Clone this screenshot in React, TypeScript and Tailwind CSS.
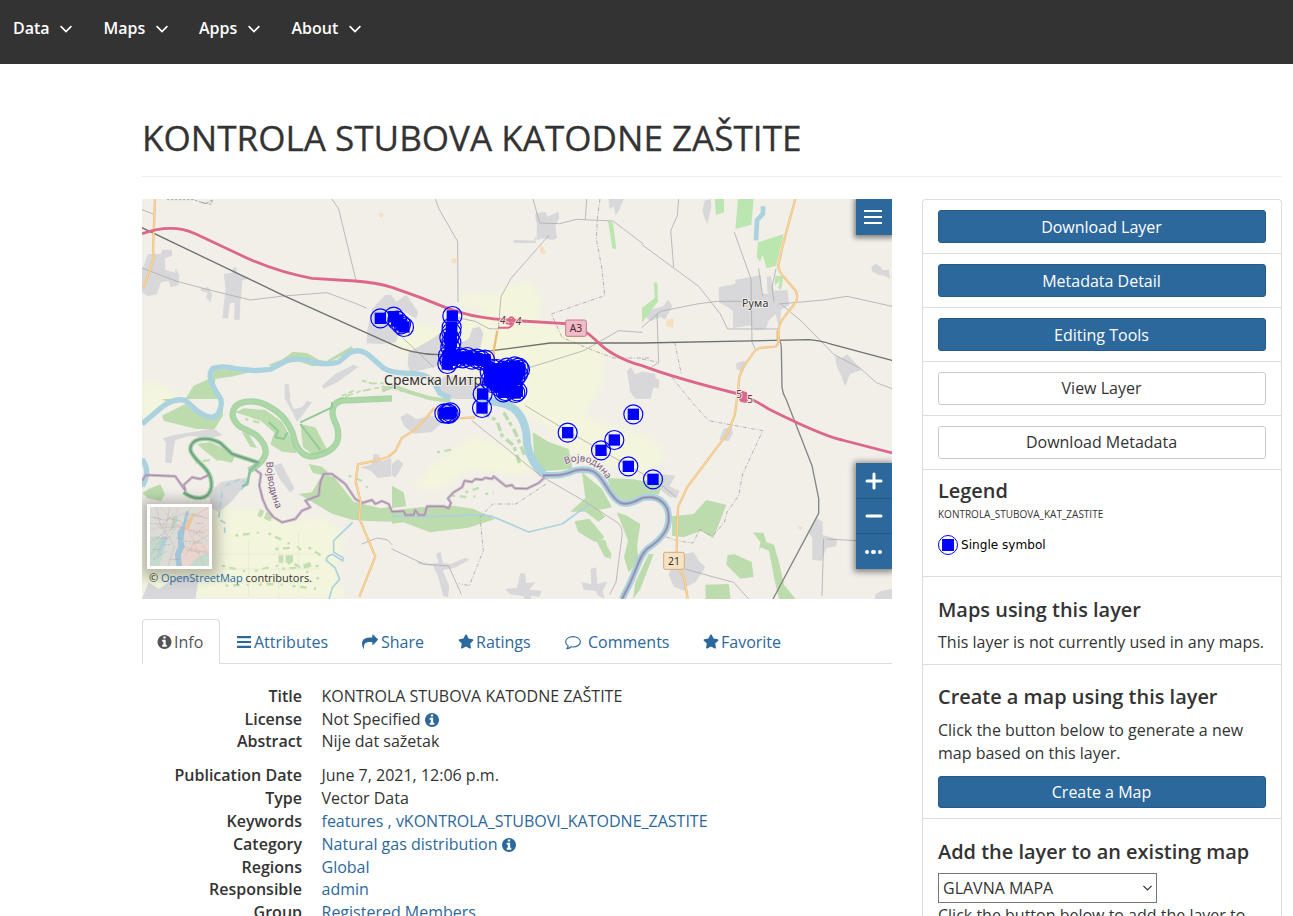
import type { ReactNode } from "react";
import { FaStar } from "react-icons/fa";
import { Minus, Plus } from "lucide-react";

const navItems = [
  { label: "Data", cls: "w-[90.500px] gap-[10px]" },
  { label: "Maps", cls: "w-[95.500px] gap-[11px]" },
  { label: "Apps", cls: "w-[92.500px] gap-[11px]" },
  { label: "About", cls: "w-[90px] gap-[10.500px]" },
];

function Chevron({ className = "" }: { className?: string }) {
  return (
    <svg viewBox="0 0 12 8" className={className} fill="none" stroke="currentColor" strokeWidth="1.700">
      <path d="M.6 1.200 6 6.500l5.400-5.300" />
    </svg>
  );
}

function InfoIcon({ className = "" }: { className?: string }) {
  return (
    <svg viewBox="0 128 1536 1536" className={className} fill="currentColor">
      <path d="M1024 1376v-160q0-14-9-23t-23-9h-96v-512q0-14-9-23t-23-9h-320q-14 0-23 9t-9 23v160q0 14 9 23t23 9h96v320h-96q-14 0-23 9t-9 23v160q0 14 9 23t23 9h448q14 0 23-9t9-23zm-128-896v-160q0-14-9-23t-23-9h-192q-14 0-23 9t-9 23v160q0 14 9 23t23 9h192q14 0 23-9t9-23zm640 416q0 209-103 385.500t-279.500 279.500-385.500 103-385.500-103-279.500-279.500-103-385.500 103-385.500 279.500-279.500 385.500-103 385.500 103 279.500 279.500 103 385.500z" />
    </svg>
  );
}

function ShareIcon() {
  return (
    <svg viewBox="0 0 1792 1792" className="h-4 w-4" fill="currentColor">
      <path d="M1792 640q0 26-19 45l-512 512q-19 19-45 19t-45-19-19-45v-256h-224q-98 0-175.500 6t-154 21.500-133 42.500-105.500 69.500-80 101-48.500 138.500-17.500 181q0 55 5 123 0 6 2.500 23.500t2.500 26.500q0 15-8.500 25t-23.500 10q-16 0-28-17-7-9-13-22t-13.500-30-10.500-24q-127-285-127-451 0-199 53-333 162-403 875-403h224v-256q0-26 19-45t45-19 45 19l512 512q19 19 19 45z" />
    </svg>
  );
}

function CommentIcon() {
  return (
    <svg viewBox="0 0 16 16" className="h-4 w-4" fill="none" stroke="currentColor" strokeWidth="1.150" strokeLinejoin="round">
      <path d="M8 2.600c4.100 0 7.400 2.300 7.400 5.200S12.100 13 8 13c-.7 0-1.300-.1-1.900-.2-1.100 1-2.600 1.700-4.300 1.900.9-.9 1.300-1.700 1.500-2.800C1.600 11 .6 9.500.6 7.800.6 4.900 3.900 2.600 8 2.600z" />
    </svg>
  );
}

function NavBar() {
  return (
    <nav className="flex h-16 shrink-0 bg-[#333333] pl-[13px] pt-[17px] text-white">
      {navItems.map((n) => (
        <div key={n.label} className={`flex h-[22px] items-center font-semibold ${n.cls}`}>
          <span>{n.label}</span>
          <Chevron className="mt-[2px] h-2 w-3" />
        </div>
      ))}
    </nav>
  );
}

// Map drawing units: three per CSS pixel.
const points: [number, number][] = [
  [715, 358], [755, 353], [766, 365], [777, 376], [786, 384],
  [931, 351], [929, 385], [928, 400], [922, 416], [928, 430], [925, 445],
  [918, 470], [922, 484], [916, 495], [934, 480], [950, 474], [962, 478],
  [976, 474], [990, 482], [1005, 479], [1018, 484], [1029, 482],
  [1043, 518], [1044, 545], [1052, 510], [1060, 525], [1055, 540], [1070, 530], [1085, 515],
  [1095, 506], [1100, 530], [1092, 550], [1080, 555], [1112, 520], [1112, 548], [1065, 510], [1075, 540],
  [1120, 538], [1130, 506], [1134, 512], [1128, 525], [1118, 502], [1105, 512],
  [1075, 565], [1090, 576], [1110, 570], [1126, 577], [1120, 582], [1070, 552],
  [1084, 580], [1050, 552], [1022, 585], [1020, 627],
  [907, 643], [916, 643], [925, 640], [920, 645],
  [1277, 701], [1417, 723], [1377, 754], [1459, 802], [1474, 646], [1533, 841],
];

const villages = [
  "M18 165h38l5-13h28l2 18-22 8 1 35 30 8v-14l12 20-3 32-22 5-8-18-22 4-13 36-27 6-17-12v-66z",
  "M245 225l25-4 3-15h12l-2 16 40 15-22 8-2 32-4 30-2 55h-17l2-50h-14l-6 46h-17l6-54 4-35z",
  "M175 268l25-3 10 22-4 23-13-14 4-15-20-6z",
  "M690 330l40-42h18l15 20 30-20 35 50-5 22-40-25-12 65-10 30-45 5-42-2 2-40z",
  "M800 460l70-40 25-18 20 10-5 75-35 18-70 15-8-25z",
  "M980 420l12-32 22-5 10 22-10 45-18 18-35-8-10-25z",
  "M880 560l30-30 90 10 25 30v30H905z",
  "M1181 42l30-3 5 14 34-15 2 20-12 20 5 40-15 5-22-5-25 5 2-47-5-20z",
  "M1115 122l62 3v-10h4v17h-66z",
  "M1400 0h45l-12 30-12 20-6-28-12 8z",
  "M1688 5l18-5 2 25-12 50-7-15-8-25z",
  "M1730 265l50-10v-12l77-15 2 55 18 2-3-50 12-5 10 45 40-2 6 46-25 14-2 35-6 10-8-32-20 18-10 25-30 5-18-15-50 8v-50l-12-10-30-17z",
  "M1514 342l20-12 30-8 15-20 12 20-22 40-12-8-30 12-22-15z",
  "M2188 204l13-10 18 12 2 8 20-2 3 28-15-10-18-2-20-10z",
  "M2080 470l20 8 15-13 14 15 30 33-35 12-15 38-10-30-16-35z",
  "M1455 516l12-12 12 22 21-8 40 6v12l12 8-2 25-15-4-10 34h-45l-15-20z",
  "M1783 493l24-8 6 15-12 18-18-8z",
  "M540 560l40-35 55-28 14 7-62 45-42 20z",
  "M428 555h12l6 45h-18z",
  "M62 718l35-10 80-13 35-7 30 20-30 8-70-5-42 12-12 70-18-2 2-60z",
  "M202 880l35-30 50-10 38-5-22 30-32 40-40 35-25-15z",
  "M395 800l22-8 40 75-12 15-32-42z",
  "M430 600h12l13 30 25-5 15-20 15 5-30 40-15 18-12-25z",
  "M655 805l35-10 5-30 15 2 8 20 30-10v55l-40 5-22-22z",
  "M775 655l20-12 28 18 45-12 40 15-38 35-55 5-28-22z",
  "M750 795l18-15 16 15-24 42-10-8z",
  "M825 1085l35 10 30-3-8-28 14-5 7 34 25 1 42-18 12 6-45 25-35 6 20 50-4 32-14-4-16-60-15-30-46-6z",
  "M1090 1170l35-3 10-45 15 2 2 28 28-2-18 22 38 3-8 18-25-2 3 20-16 2-10-22-40-5z",
  "M1318 1150l30 5-2-45 16-5 4 50 30-8-14 30 6 22-18-8-10-15-34-4z",
  "M1550 825l50 5-18 32 30 15-8 20-22-4-40-32z",
  "M1745 690l25-8 2 22-12 22-28-4z",
  "M1600 1070l55-10 15 25 20 20-30 45-25 12-5 15-34-14-16-35z",
  "M2000 1000l22-42 20 10v40l43 12-2 22-30 5-14 38-28-2v-65z",
  "M2200 1185l20-10 30-5v30h-50z",
  "M20 1150l30 20 60-40 60 10-10 60H0z",
];

const greens = [
  "M210 510l60 3 60 5-55 14-55 8-2 19 20 41H130l25-40 45-20z",
  "M378 498l45-18 30-22 42 4 38 22 20 2 75-44 8 10-90 45-35 5-60-22-60 22z",
  "M60 650l70-35 35 25 60 15 10-55h8v50l-25 40-55 0-60-15-38-10z",
  "M60 600h60l-40 14z",
  "M280 640l25-12 65 5 50 35 35 65 10 30-45-5-35-22 12-35-40-35-42-15z",
  "M475 675l45 10 40 75-42 10-35-25z",
  "M500 795l40 8 22 20-20 6-30-8z",
  "M165 735l40-6 75 38-10 24-50-10-35-28z",
  "M300 700l20 4 25 44-20-5z",
  "M20 870l35-14 14 30-12 20-40-8-16-16z",
  "M470 885l40-5 30-52 35 5 60 75 80 20 35-5v45l-75-2-45-4-60-18z",
  "M750 935l85-10 100-5 60 10 64 30-80 26-115 14-80-30-34 4z",
  "M750 860l35 20 8 42-43 5z",
  "M1172 700l50 30 58 20 12 60-30 2-65 5-20-40z",
  "M1395 837l80 4 25 5v48l-50 12-35-15z",
  "M1500 846l70-10-20 50-50 5z",
  "M1320 820l60 50 30 55-40 8 20 20-20 15-40-30-45 0 45-40z",
  "M1297 967l45-8 45 55-28 15-50-30z",
  "M1360 1020l30 4 18 55-20-5z",
  "M1425 940l30 10 40 25-10 65 5 45-30 35-14-45 12-50z",
  "M1590 952l65-7 38-42 60 14-22 58-18 42-36-22-52 20-35-5z",
  "M1833 1000l32 2 8 28 23 7 18 65 12 55 35 43h-50l-12-50-18-95-24-10-6 12 4-28z",
  "M1757 1068l20-2 52 23 6 45-40 5-42-42z",
  "M1690 1157l70-2 6 45h-75z",
  "M1480 1150l40-85 15 0-40 105-22 30z",
];

const brightGreens = [
  "M1788 0h47l-7 77-48 13z",
  "M1848 130l77-25-22 95-29 8-12-40-8 20-10-15z",
  "M1718 0h28v40l-24 8z",
  "M1398 65l15 6 10 80-12-3z",
  "M1536 250l10 2 2 55-48 65v-45l38-30z",
  "M1900 230l25 2-8 40-8-5 4-22-15 15z",
];

const borderWest =
  "M0 845L12 828L100 832L130 875L125 858L150 835L175 840L200 828" +
  "M340 812L357 825L352 860L362 900L375 930L395 955L420 970L460 960L480 935L505 925L490 905L530 890L535 850L545 825L570 825L610 855L640 900L660 912L690 903L700 915L720 906L740 915L750 938" +
  "L785 936L790 948L815 948L820 933L830 948L848 948L855 922L905 922L920 928L927 912L918 898L935 880L960 865L968 845L990 849L1000 840L1020 842L1030 836L1050 840L1055 832L1065 840L1092 862L1110 858L1118 868L1155 869L1190 852L1205 838V825";

const riverEast =
  "M1010 606Q1095 604 1125 638T1155 735Q1165 790 1205 825";
const riverLoop =
  "M1205 829C1250 829 1268 829 1300 814C1350 806 1365 818 1390 858C1425 915 1440 930 1500 897Q1555 885 1576 930C1592 985 1560 1020 1515 1050C1485 1080 1490 1110 1440 1200";

const oxbow =
  "M320 815C382 782 384 748 345 710C320 690 285 690 273 655C262 605 335 594 385 625C425 648 438 672 452 702C462 752 485 782 525 770C575 758 600 730 584 680C565 645 562 600 620 604l130-6";
const oxbowWest =
  "M352 792L270 765L235 732C190 708 145 720 145 752C155 792 215 805 208 865C200 908 155 902 125 880";

const orangeRoads =
  "M39 0l-6 155 4 20-32 90M1960 0l-38 140-12 55q-4 12 10 32l42 50q8 22-3 36l-39 50q-12 20-10 50 2 26-12 30l-45 4q-15 5-24 22l-25 35-12 30-4 45-10 70-22 55-120 160-28 60-5 165 25 55 9 56M1000 655l-65 4-30-20-30-10-25 30-28 32-42 25-20 40-22 18-42 12-48 10-7 52 15 60-4 50 48 115-48 120";

const motorway =
  "M0 104Q90 72 160 104L300 170Q400 218 510 238L640 246Q700 250 750 265Q830 292 910 325C980 352 1040 361 1140 366L1270 374Q1325 388 1360 422Q1410 475 1500 500Q1600 538 1790 585Q1830 598 1880 630Q2040 710 2100 723L2250 762";

function Path({ d, c, w = 4, dash }: { d: string; c: string; w?: number; dash?: string }) {
  return <path d={d} fill="none" stroke={c} strokeWidth={w} strokeDasharray={dash} strokeLinejoin="round" />;
}

function MapDrawing() {
  return (
    <svg viewBox="0 0 2250 1200" className="block h-[400px] w-[750px]">
      <defs>
        <path id="labelWest" d="M373 788Q376 885 414 950" />
        <path id="labelEast" d="M1270 796C1320 774 1372 792 1402 856" />
        <filter id="soft" x="-20%" y="-20%" width="140%" height="140%">
          <feGaussianBlur stdDeviation="10" />
        </filter>
      </defs>
      <rect width="2250" height="1200" fill="#f2efe9" />
      <g fill="#f3f5dc" filter="url(#soft)">
        <path d="M0 540l60 20 70 40-60 20L0 660z" />
        <path d="M1080 265l90-20 30 60-15 55 110 45 80 20 10 120-60 110 200 60 50 60-80 60-210-80-90-90-150-70-60-180z" />
        <path d="M750 360l170 30 60-50 150 80v150l-230-90-90 0-70-60z" />
        <path d="M960 320l-30-30 120-10 30 60z" />
        <path d="M1080 740l-90-30-120 90-60 70 90 0 80-60 150 20 60-30z" />
        <path d="M210 920l130 10 90 40 110-20 70 60-30 90 30 100H0v-170l200-30z" />
      </g>
      <g fill="#d8d7d9">{villages.map((d) => <path key={d} d={d} />)}</g>
      <g fill="#bcdcad">{greens.map((d) => <path key={d} d={d} />)}</g>
      <g fill="#bce6b0">{brightGreens.map((d) => <path key={d} d={d} />)}</g>
      <Path c="#bcdcad" w={12} d="M750 560l55 20 60 18 60 8M720 575l30-12" />
      <Path c="#bcdcad" w={5} dash="14 7 25 10" d="M590 600l60-22 75-15 60 15M600 590l35-15M660 545l30 8 35 0" />
      <Path c="#bcdcad" w={10} dash="26 8 12 12" d="M1020 640l45 25 15 45 35 30 20 60M1085 640l35 60 30 75M1310 980l65 30 30 60M1430 945l40 65 10 80" />
      <Path c="#bfdfae" w={7} dash="9 14 20 22 6 30" d="M885 760l50-10M970 880l60-20M930 890l55 5 70-15M240 1100l80 20 130-30 80 50M400 1050l95-8 60 40M420 1110l120-10M280 1010l90-12 120 60M250 1160l150-5 130 15M620 830l50 20 8 25M160 790l60-10 40 10M310 660l70 18" />
      <Path c="#c3deb3" w={22} dash="14 7 22 50" d="M350 940l45 20M410 1080l80 0 10 30" />
      <Path c="#e4e9d0" w={2} d="M230 1065h290M240 1110h290M320 1020v170M410 1040v160M470 1000v180M210 1150h310" />
      <Path c="#aad3df" w={16} d="M0 675L60 624Q95 596 130 604L165 635Q210 668 228 645Q242 622 236 600L215 565Q195 525 213 508Q245 498 285 510L340 515L385 511L430 487Q460 475 495 484Q545 502 590 489L622 462Q650 446 680 468L725 508Q750 523 800 523Q850 522 875 548L893 582L925 597" />
      <Path c="#aad3df" w={24} d={riverEast} />
      <Path c="#aad3df" w={20} d={riverLoop} />
      <Path c="#aad3df" w={5} d="M750 952l140 0 130-5 30 5 110 47 100-24 80-58M632 970l-57 55v35l28 16v10l-32-20q-18 4-18 18l26 22 14 35-22 25-10 34" />
      <Path c="#aad3df" w={14} d="M1863 22l0 22-18 20-3 60" />
      <Path c="#aad3df" w={5} dash="18 11" d="M240 880l-10 80 18 12v30M250 860l45-20 20 14-18 18" />
      <Path c="#aad3df" w={16} d="M0 780q28 38 0 82" />
      <g opacity=".75">
        <Path c="#90c994" w={19} d={oxbow} />
      </g>
      <Path c="#acd9a3" w={9} d={oxbow} />
      <Path c="#91c999" w={6} d="M380 670l28 25-8 20 25 5 12-20M475 670l95-45 0-15M475 675l60 78" />
      <Path c="#a8cfae" w={14} d={oxbowWest} />
      <Path c="#6fa57c" w={6} d={oxbowWest} />
      <Path c="#8dc2a0" w={8} d="M352 790l-28 25-8 40-16 8" />
      <g opacity=".8">
        <Path c="#bfabc0" w={9} d={borderWest} />
      </g>
      <Path c="#a68ba7" w={3} d={borderWest} />
      <Path c="#a9a0be" w={8} d={riverLoop} />
      <Path c="#858bae" w={3} d={riverLoop} />
      <g strokeLinecap="round">
        <Path c="#b0afae" w={2.500} d="M0 32l38 15M570 0l20 30 51 210M880 0l10 28 57 100 1 180M0 207l105 40 90 24 130 32 100-12 130-10 85 32 33 14M1173 0l20 72 60 2 50-13 110 5 90 68M1220 110l-18 20-95 108-30 55-8 95M1334 0l-4 60M1500 137l95 70 75 55 65 83 22 45h150M1610 0l-4 50-20 45 9 108M1777 100l50 140 3 190 12 25M1850 210l12 80M1902 210l-12 55 6 42M1910 315l135-12 70-11 135 30M1920 318l60 50 95 98 80 42 48 43 47 18M1500 385l55-48 110-22 60-8h80M1545 345l5 146-20 12M770 405l105 100M940 355l60 12 40 22 30 1M1165 505l160-50 105-60 70 5M1150 620l150 90 230 130M990 665l205 165 130 75 100 65q18 12 15 40l-18 140-18 35M750 1050l95 45 75 6 38 85M2055 1020l90 5M2045 1020l-5 170M1630 1110l70 20 75 20 45 50M660 1035l45-18 30 5 15 15M1560 860l40 32" />
      </g>
      <Path c="#aaa3aa" w={2.500} dash="12 5 3 5" d="M1374 0l-8 60-3 60 17 90 8 80-160 55 32 70 95 40 60 22 110 0M1598 430l20 95M1590 535l60 75 50 55 162 30-60 130-12 65-35 50-8 30-36 42-38-20-20 40-45-6-35-12M1500 480l45 9M1212 855l-90 60-70 0-38 40 10 100-42 105-30-6" />
      <Path c="#707070" w={4} d="M0 86L430 292 750 436Q805 465 890 467L1050 455L1225 432H1500L2000 422Q2040 426 2070 436L2250 484" />
      <Path c="#858585" w={4} d="M1912 424q6 8 6 22l2 120q2 18 12 34l78 200 20 98v45l-137 257" />
      <Path c="#ecbc7b" w={7} d={orangeRoads} />
      <Path c="#ecbc7b" w={7} d="M1066 395l-11 60 1 30M1907 395v30" />
      <Path c="#f8d59f" w={4} d={orangeRoads} />
      <Path c="#dc678a" w={8.500} d={motorway} />
      <Path c="#dc678a" w={6} d="M1068 386h32q16-6 16-25-8-12-15 0l8 15-18-4" />
      <path d="M1790 572l24 8 8 18-8 14-18-3-6-10z" fill="#dc678a" />
      <g fill="#f7d4aa" opacity=".65">
        <circle cx="718" cy="48" r="7" /><circle cx="936" cy="185" r="8" />
        <path d="M1195 138l10 8 8 15-12 6-8-12zM1574 362l22-4-4 28-20-4zM1970 980l12 4-4 10-10-6z" />
      </g>
      <path d="M75 2l80 0 35 12 22-12-5 14-30-6" fill="none" stroke="#999" strokeWidth="2.500" strokeDasharray="8 4" />
      <rect x="1271" y="363" width="62" height="49" rx="5" fill="#edbdc9" stroke="#ca7890" strokeWidth="3" />
      <rect x="1565" y="1060" width="62" height="51" rx="5" fill="#f8e2c4" stroke="#d1ac82" strokeWidth="3" />
      <g fontFamily="'Noto Sans', sans-serif" fill="#333">
        <text x="1302" y="398" fontSize="31" textAnchor="middle" fill="#59212d">A3</text>
        <text x="1596" y="1097" fontSize="31" textAnchor="middle">21</text>
        <g stroke="#f2efe9" strokeWidth="6" paintOrder="stroke" strokeLinejoin="round">
          <text x="726" y="559" fontSize="42" textLength="418">Сремска Митровица</text>
          <text x="1800" y="323" fontSize="32" textLength="79">Рума</text>
          <g fontSize="30" fill="#712f43">
            <text x="1074" y="375" fontStyle="italic">4</text>
            <text x="1121" y="377" fontStyle="italic">4</text>
            <text x="1783" y="597">5</text>
            <text x="1816" y="611">5</text>
          </g>
          <g fontSize="29" fill="#79577d" strokeWidth="4">
            <text><textPath href="#labelWest">Војводина</textPath></text>
            <text><textPath href="#labelEast">Војводина</textPath></text>
          </g>
        </g>
      </g>
      {points.map(([x, y], i) => (
        <g key={i} transform={`translate(${x} ${y})`}>
          <circle r="28.500" fill="none" stroke="#0000ff" strokeWidth="3.600" />
          <rect x="-17" y="-17" width="34" height="34" fill="#0000ff" />
        </g>
      ))}
    </svg>
  );
}

function OverviewThumb() {
  return (
    <svg viewBox="0 0 180 180" className="block h-full w-full">
      <rect width="180" height="180" fill="#dcdcd6" />
      <path d="M90 80l60-80h30v90l-70 20-18 70H75z" fill="#e3d9d2" />
      <path d="M100 130l35-25 45 5v70h-84z" fill="#ead5ce" />
      <path d="M0 90l30 0 18 28-20 62H0zM135 160l35-20 10 0v40h-60z" fill="#c4d9cb" />
      <path d="M70 30l15 0-8 30-15 15zM30 100l12-12 12 8-20 44-12 10z" fill="#b7d8c6" />
      <path d="M84 76l16-24 10-40 8 2-12 54-4 34 4 20-12 24 4 34H80l-4-36 10-24z" fill="#a3c5d8" />
      <path d="M28 118l18-30 10 6-20 34-10 22z" fill="#b3cfdf" />
      <g fill="none" strokeWidth="1.600" opacity=".75">
        <path d="M0 30l45 10 60-20 75 15M0 110l48-35 60-30 72-45M20 0l10 50 45 70-20 60M60 0L45 80 0 150M70 60l45 5 65 40M105 150l30-40 45-25" stroke="#cba0b8" />
        <path d="M0 70l70-20 65 30 45-10M85 0l-18 60-45 80M120 0l-6 60 50 120M100 120l80 20M30 0l80 80" stroke="#dfae9e" />
        <path d="M108 68l20-46 6 2-17 44z" fill="#edc07f" stroke="#e8b77e" />
        <path d="M0 50h45l30-35M20 95h38l20-30M105 105h50l20 35M122 130l45 8M130 90l40-35M10 160l40-25" stroke="#88a1ad" strokeDasharray="8 5" />
        <path d="M12 30l25 10M55 35l40 8M30 65l40-5M130 20l30 10M110 130l45 10M125 70l40 10M20 55h25M80 95h20M40 115h25M130 110h25M10 130h18M60 160h30M140 50h25" stroke="#8f8589" strokeDasharray="3 2" />
      </g>
    </svg>
  );
}

function MapView() {
  return (
    <div className="relative h-[400px] w-[750px] overflow-hidden bg-[#f2efe9]">
      <MapDrawing />
      <button className="absolute right-0 top-0 flex h-9 w-9 flex-col items-center justify-center gap-1 bg-[#2c689c] pr-[2px] shadow-[0_1px_5px_2px_rgba(0,0,0,.45)]">
        <span className="h-[2px] w-[18px] bg-white" />
        <span className="h-[2px] w-[18px] bg-white" />
        <span className="h-[2px] w-[18px] bg-white" />
      </button>
      <div className="absolute right-0 top-[264px] flex w-9 flex-col bg-[#2c689c] text-white shadow-[0_1px_6px_2px_rgba(0,0,0,.45)]">
        <button className="flex h-[36px] items-center justify-center border-b border-[#255783] pr-px pt-px"><Plus size={24} strokeWidth={3} className="h-6 w-6" /></button>
        <button className="flex h-[35px] items-center justify-center border-b border-[#255783] pr-px"><Minus size={24} strokeWidth={3} className="h-6 w-6" /></button>
        <button className="flex h-[35px] items-center justify-center gap-[2px] pr-px pt-px">
          <span className="h-[4.500px] w-[4.500px] rounded-full bg-white" />
          <span className="h-[4.500px] w-[4.500px] rounded-full bg-white" />
          <span className="h-[4.500px] w-[4.500px] rounded-full bg-white" />
        </button>
      </div>
      <div className="absolute left-[5px] top-[305px] h-[65px] w-[65px] border-[3px] border-white shadow-[0_2px_12px_6px_rgba(0,0,0,.25)]">
        <OverviewThumb />
      </div>
      <div className="absolute left-[7px] top-[371px] whitespace-nowrap text-[11px] leading-4 text-[#333]">
        © <span className="text-[#2c689c]">OpenStreetMap</span> contributors.
      </div>
    </div>
  );
}

function Tabs() {
  const item = "flex items-center whitespace-nowrap pt-px text-[#2c689c]";
  return (
    <div className="mt-5 flex h-[45px] border-b border-[#dddddd]">
      <div className="-mb-px flex w-[78px] items-center gap-[2px] rounded-t border border-b-0 border-[#dddddd] bg-white pl-[14px] text-[#555]">
        <InfoIcon className="h-[14px] w-[15px]" />Info
      </div>
      <div className={`${item} ml-[17px] w-[125px]`}>
        <svg viewBox="0 0 14 12" className="mr-[3px] h-3 w-[14px]" fill="currentColor"><path d="M0 0h14v2.200H0zM0 4.900h14v2.200H0zM0 9.800h14V12H0z" /></svg>
        Attributes
      </div>
      <div className={`${item} w-[96px] gap-[3px]`}><ShareIcon />Share</div>
      <div className={`${item} w-[107px] gap-[2px]`}><FaStar className="h-[15px] w-4" />Ratings</div>
      <div className={`${item} w-[138px] gap-[7px]`}><CommentIcon />Comments</div>
      <div className={`${item} gap-[2px]`}><FaStar className="h-[15px] w-4" />Favorite</div>
    </div>
  );
}

function Info() {
  return <InfoIcon className="ml-[5px] inline h-[14px] w-[14px] align-[-2px] text-[#2c689c]" />;
}

function Link({ children }: { children: ReactNode }) {
  return <span className="text-[#2c689c]">{children}</span>;
}

function Row({ label, children }: { label: string; children: ReactNode }) {
  return (
    <div className="flex h-[22.800px] leading-[22.800px]">
      <dt className="w-40 text-right font-semibold">{label}</dt>
      <dd className="ml-[19.500px] whitespace-nowrap">{children}</dd>
    </div>
  );
}

function Details() {
  return (
    <dl className="mt-[20.800px]">
      <Row label="Title">KONTROLA STUBOVA KATODNE ZAŠTITE</Row>
      <Row label="License">Not Specified<Info /></Row>
      <Row label="Abstract">Nije dat sažetak</Row>
      <div className="h-[11.200px]" />
      <Row label="Publication Date">June 7, 2021, 12:06 p.m.</Row>
      <Row label="Type">Vector Data</Row>
      <Row label="Keywords"><Link>features</Link> <Link>, vKONTROLA_STUBOVI_KATODNE_ZASTITE</Link></Row>
      <Row label="Category"><Link>Natural gas distribution</Link><Info /></Row>
      <Row label="Regions"><Link>Global</Link></Row>
      <Row label="Responsible"><Link>admin</Link></Row>
      <Row label="Group"><Link>Registered Members</Link></Row>
    </dl>
  );
}

function PanelButton({ label, primary }: { label: string; primary?: boolean }) {
  return (
    <button
      className={`block h-[33px] w-[328px] rounded-[3px] border pr-px leading-5 ${
        primary ? "border-[#265a87] bg-[#2c689c] pt-px text-white" : "border-[#cccccc] bg-white pb-px text-[#333]"
      }`}
    >
      {label}
    </button>
  );
}

const heading = "text-[19.950px] font-semibold leading-6";

function Sidebar() {
  return (
    <aside className="w-[360px] rounded-t border border-b-0 border-[#dddddd]">
      <div className="h-[54px] border-b border-[#dddddd] px-[15px] pt-[10px]"><PanelButton primary label="Download Layer" /></div>
      <div className="h-[54px] border-b border-[#dddddd] px-[15px] pt-[10px]"><PanelButton primary label="Metadata Detail" /></div>
      <div className="h-[54px] border-b border-[#dddddd] px-[15px] pt-[10px]"><PanelButton primary label="Editing Tools" /></div>
      <div className="h-[54px] border-b border-[#dddddd] px-[15px] pt-[10px]"><PanelButton label="View Layer" /></div>
      <div className="h-[54px] border-b border-[#dddddd] px-[15px] pt-[10px]"><PanelButton label="Download Metadata" /></div>
      <section className="h-[107px] border-b border-[#dddddd] px-[15px] pt-[9px]">
        <h4 className={heading}>Legend</h4>
        <p className="mt-[3px] text-[10px] leading-4">KONTROLA_STUBOVA_KAT_ZASTITE</p>
        <div className="mt-[13px] flex items-center gap-[3px] font-['DejaVu_Sans',sans-serif] text-[12.100px] leading-5 text-black">
          <span className="flex h-5 w-5 items-center justify-center rounded-full border border-[#0000ff]">
            <span className="h-3 w-3 bg-[#0000ff]" />
          </span>
          Single symbol
        </div>
      </section>
      <section className="h-[88px] border-b border-[#dddddd] px-[15px] pt-[21px]">
        <h4 className={heading}>Maps using this layer</h4>
        <p className="mt-[9px] whitespace-nowrap leading-[23px]">This layer is not currently used in any maps.</p>
      </section>
      <section className="h-[154px] border-b border-[#dddddd] px-[15px] pt-5">
        <h4 className={heading}>Create a map using this layer</h4>
        <p className="mb-[11px] mt-[10px] leading-[23px]">Click the button below to generate a new map based on this layer.</p>
        <button className="block h-8 w-[328px] rounded-[3px] border border-[#265a87] bg-[#2c689c] pr-px leading-5 text-white">
          Create a Map
        </button>
      </section>
      <section className="px-[15px] pt-[21px]">
        <h4 className={heading}>Add the layer to an existing map</h4>
        <div className="mt-[9px] flex h-[30px] w-[219px] items-center justify-between border border-[#767676] pl-1 pr-1">
          <span>GLAVNA MAPA</span>
          <Chevron className="h-[6px] w-[9px]" />
        </div>
        <p className="mt-px whitespace-nowrap leading-[23px]">Click the button below to add the layer to</p>
      </section>
    </aside>
  );
}

export default function App() {
  return (
    <div className="flex h-[916px] w-[1293px] flex-col overflow-hidden bg-white font-['Open_Sans',sans-serif] text-base text-[#333333]">
      <NavBar />
      <main className="ml-[142px] w-[1140px]">
        <h1 className="h-[113px] border-b border-[#eeeeee] pt-[53px] text-[35.100px] leading-10 [-webkit-text-stroke:0.300px_#333]">
          KONTROLA STUBOVA KATODNE ZAŠTITE
        </h1>
        <div className="mt-[22px] flex items-start gap-[30px]">
          <div className="w-[750px]">
            <MapView />
            <Tabs />
            <Details />
          </div>
          <Sidebar />
        </div>
      </main>
    </div>
  );
}
